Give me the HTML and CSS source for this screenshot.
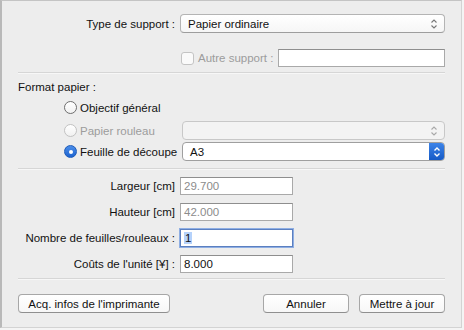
FILE: index.html
```html
<!DOCTYPE html>
<html lang="fr">
<head>
  <meta charset="UTF-8">
  <title>Paramètres papier</title>
  <link rel="stylesheet" href="styles.css">
</head>
<body>
  <div class="window">

    <div class="row row-type">
      <span class="label">Type de support :</span>
      <div class="select">
        <span class="select-text">Papier ordinaire</span>
        <svg class="chev" width="8" height="12" viewBox="0 0 8 12"><path d="M1.5 4.5 L4 2 L6.5 4.5 M1.5 7.5 L4 10 L6.5 7.5" fill="none" stroke="#777" stroke-width="1.1"/></svg>
      </div>
    </div>

    <div class="row row-other">
      <span class="label"></span>
      <div class="other">
        <span class="check"></span>
        <span class="other-text">Autre support :</span>
        <div class="field field-other"></div>
      </div>
    </div>

    <div class="sep sep-1"></div>

    <div class="group-title">Format papier :</div>

    <div class="radio-row radio-1">
      <span class="radio"></span>
      <span class="radio-text">Objectif général</span>
    </div>

    <div class="radio-row radio-2 disabled">
      <span class="radio"></span>
      <span class="radio-text">Papier rouleau</span>
      <div class="select select-off">
        <span class="select-text"></span>
        <svg class="chev" width="8" height="12" viewBox="0 0 8 12"><path d="M1.5 4.5 L4 2 L6.5 4.5 M1.5 7.5 L4 10 L6.5 7.5" fill="none" stroke="#a8a8a8" stroke-width="1.1"/></svg>
      </div>
    </div>

    <div class="radio-row radio-3">
      <span class="radio on"></span>
      <span class="radio-text">Feuille de découpe</span>
      <div class="select select-active">
        <span class="select-text">A3</span>
        <span class="select-btn">
          <svg width="8" height="12" viewBox="0 0 8 12"><path d="M1.5 4.5 L4 2 L6.5 4.5 M1.5 7.5 L4 10 L6.5 7.5" fill="none" stroke="#fff" stroke-width="1.4"/></svg>
        </span>
      </div>
    </div>

    <div class="sep sep-2"></div>

    <div class="fields">
      <span class="label">Largeur [cm]</span>
      <div class="field off">29.700</div>

      <span class="label">Hauteur [cm]</span>
      <div class="field off">42.000</div>

      <span class="label">Nombre de feuilles/rouleaux :</span>
      <div class="field focus"><span class="sel">1</span></div>

      <span class="label">Coûts de l'unité [¥] :</span>
      <div class="field">8.000</div>
    </div>

    <div class="sep sep-3"></div>

    <div class="buttons">
      <button class="btn btn-info">Acq. infos de l'imprimante</button>
      <span class="spacer"></span>
      <button class="btn btn-cancel">Annuler</button>
      <button class="btn btn-ok">Mettre à jour</button>
    </div>

  </div>
</body>
</html>
```

FILE: styles.css
```css
html,
body {
  margin: 0;
  width: 100%;
  height: 100%;
}

body {
  background: #f4f4f4;
  font-family: "Liberation Sans", Arial, sans-serif;
  font-size: 11.5px;
  color: #111;
}

.window {
  box-sizing: border-box;
  width: 462px;
  height: 328px;
  background: #ededed;
  border-left: 2px solid #b9b9b9;
  border-top: 1px solid #c4c4c4;
  border-right: 1px solid #d3d3d3;
  border-bottom: 1px solid #d3d3d3;
  padding: 13px 16px 0 16px;
}

.row {
  display: grid;
  grid-template-columns: 157px 1fr;
  column-gap: 5px;
  align-items: center;
}

.label {
  text-align: right;
  white-space: nowrap;
}

/* popup buttons */
.select {
  box-sizing: border-box;
  height: 19px;
  display: flex;
  align-items: center;
  background: linear-gradient(#ffffff, #f6f6f6);
  border: 1px solid #b4b4b4;
  border-bottom-color: #9d9d9d;
  border-radius: 4px;
  padding: 0 6px 0 7px;
}

.select-text {
  flex: 1;
  white-space: nowrap;
}

.chev {
  display: block;
}

.row-other {
  margin-top: 16px;
}

.other {
  display: flex;
  align-items: center;
}

.check {
  box-sizing: border-box;
  flex: none;
  width: 13px;
  height: 13px;
  margin-left: 1px;
  border: 1px solid #c4c4c4;
  border-radius: 3px;
  background: #fafafa;
}

.other-text {
  color: #9c9c9c;
  margin-left: 4px;
  margin-right: 5px;
  white-space: nowrap;
}

.field {
  box-sizing: border-box;
  height: 18px;
  background: #fff;
  border: 1px solid #a9a9a9;
  border-top-color: #8e8e8e;
  padding: 1px 0 0 3px;
  line-height: 14px;
}

.field-other {
  flex: 1;
}

.sep {
  height: 1px;
  background: #d6d6d6;
  border-bottom: 1px solid #f7f7f7;
}

.sep-1 {
  margin-top: 5px;
}

.group-title {
  margin-top: 6px;
  line-height: 14px;
}

.radio-row {
  display: flex;
  align-items: center;
  height: 19px;
  padding-left: 46px;
}

.radio-1 {
  margin-top: 4px;
}

.radio-2 {
  margin-top: 4px;
}

.radio-3 {
  margin-top: 2px;
}

.radio {
  box-sizing: border-box;
  flex: none;
  width: 13px;
  height: 13px;
  border-radius: 50%;
  border: 1px solid #6e6e6e;
  background: linear-gradient(#ffffff, #f1f1f1);
  position: relative;
}

.radio.on {
  border-color: #1d5bb8;
  background: linear-gradient(#4b8eea, #1d63cf);
}

.radio.on::after {
  content: "";
  position: absolute;
  left: 3.5px;
  top: 3.5px;
  width: 4px;
  height: 4px;
  border-radius: 50%;
  background: #fff;
}

.radio-text {
  margin-left: 3px;
  width: 102px;
  white-space: nowrap;
}

.disabled .radio {
  border-color: #c2c2c2;
}

.disabled .radio-text {
  color: #9c9c9c;
}

.radio-row .select {
  flex: 1;
}

.select-off {
  background: #f3f3f3;
  border-color: #c8c8c8;
}

.select-active {
  padding-right: 0;
  border-color: #9f9f9f;
  background: #fff;
  overflow: hidden;
}

.select-btn {
  width: 16px;
  height: 19px;
  margin-top: -1px;
  margin-bottom: -1px;
  margin-right: -1px;
  border-radius: 0 4px 4px 0;
  background: linear-gradient(#3f86ea, #1458c4);
  display: flex;
  align-items: center;
  justify-content: center;
}

.sep-2 {
  margin-top: 7px;
}

.fields {
  display: grid;
  grid-template-columns: 157px 113px;
  column-gap: 5px;
  row-gap: 8px;
  align-items: center;
  margin-top: 7px;
}

.fields .field {
  height: 18px;
}

.field.off {
  color: #8c8c8c;
}

.field.focus {
  border: 1px solid #5b7fc0;
  box-shadow: 0 0 0 1px #8eaee3;
}

.sel {
  background: #b5d2fb;
  padding: 0 1px;
}

.sep-3 {
  margin-top: 5px;
}

.buttons {
  display: flex;
  align-items: center;
  margin-top: 14px;
}

.spacer {
  flex: 1;
}

.btn {
  box-sizing: border-box;
  height: 19px;
  font-family: inherit;
  font-size: 11.5px;
  color: #111;
  background: linear-gradient(#ffffff, #f7f7f7);
  border: 1px solid #a7a7a7;
  border-bottom-color: #8f8f8f;
  border-radius: 4px;
  padding: 0;
  line-height: 16px;
}

.btn-info {
  width: 152px;
}

.btn-cancel {
  width: 86px;
}

.btn-ok {
  width: 86px;
  margin-left: 10px;
}
```
